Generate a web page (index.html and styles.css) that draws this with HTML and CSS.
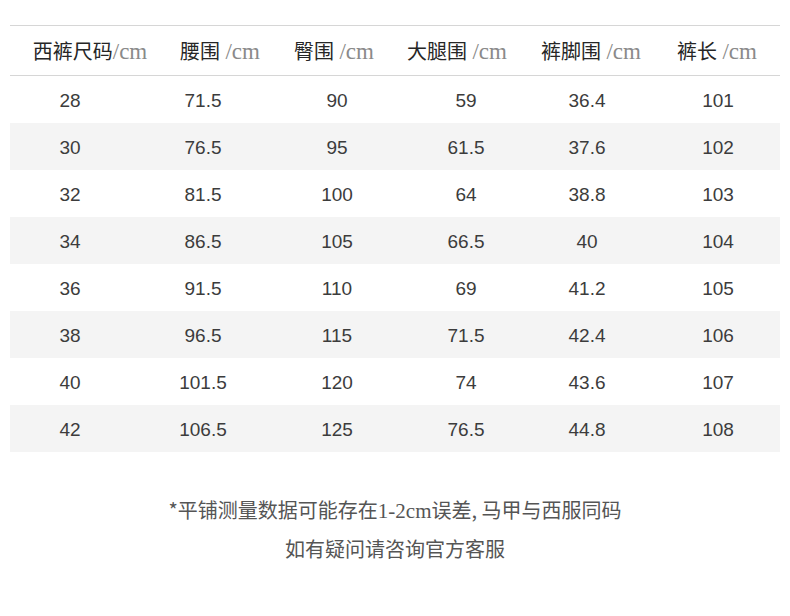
FILE: index.html
```html
<!DOCTYPE html>
<html lang="zh">
<head>
<meta charset="utf-8">
<link rel="stylesheet" href="styles.css">
</head>
<body>
<div class="page">
  <div class="table">
    <div class="row head">
      <div class="cell"><span class="zh">西裤尺码</span><span class="unit">/cm</span></div>
      <div class="cell"><span class="zh">腰围</span> <span class="unit">/cm</span></div>
      <div class="cell"><span class="zh">臀围</span> <span class="unit">/cm</span></div>
      <div class="cell"><span class="zh">大腿围</span> <span class="unit">/cm</span></div>
      <div class="cell"><span class="zh">裤脚围</span> <span class="unit">/cm</span></div>
      <div class="cell"><span class="zh">裤长</span> <span class="unit">/cm</span></div>
    </div>
    <div class="row"><div class="cell">28</div><div class="cell">71.5</div><div class="cell">90</div><div class="cell">59</div><div class="cell">36.4</div><div class="cell">101</div></div>
    <div class="row alt"><div class="cell">30</div><div class="cell">76.5</div><div class="cell">95</div><div class="cell">61.5</div><div class="cell">37.6</div><div class="cell">102</div></div>
    <div class="row"><div class="cell">32</div><div class="cell">81.5</div><div class="cell">100</div><div class="cell">64</div><div class="cell">38.8</div><div class="cell">103</div></div>
    <div class="row alt"><div class="cell">34</div><div class="cell">86.5</div><div class="cell">105</div><div class="cell">66.5</div><div class="cell">40</div><div class="cell">104</div></div>
    <div class="row"><div class="cell">36</div><div class="cell">91.5</div><div class="cell">110</div><div class="cell">69</div><div class="cell">41.2</div><div class="cell">105</div></div>
    <div class="row alt"><div class="cell">38</div><div class="cell">96.5</div><div class="cell">115</div><div class="cell">71.5</div><div class="cell">42.4</div><div class="cell">106</div></div>
    <div class="row"><div class="cell">40</div><div class="cell">101.5</div><div class="cell">120</div><div class="cell">74</div><div class="cell">43.6</div><div class="cell">107</div></div>
    <div class="row alt"><div class="cell">42</div><div class="cell">106.5</div><div class="cell">125</div><div class="cell">76.5</div><div class="cell">44.8</div><div class="cell">108</div></div>
  </div>
  <div class="note">
    <p class="line">*平铺测量数据可能存在<span class="serif">1-2cm</span>误差, 马甲与西服同码</p>
    <p class="line">如有疑问请咨询官方客服</p>
  </div>
</div>
</body>
</html>
```
FILE: styles.css
```css
html, body {
  margin: 0;
  padding: 0;
  background: #ffffff;
  overflow: hidden;
}
.page {
  width: 790px;
  height: 616px;
  padding: 25px 10px 0;
  box-sizing: border-box;
}
.table {
  width: 770px;
  display: flex;
  flex-direction: column;
  overflow: hidden;
}
.row {
  display: grid;
  grid-template-columns: 120px 146px 122px 136px 106px 140px;
  height: 47px;
  align-items: center;
  font-family: "Liberation Sans", "Noto Sans CJK SC", sans-serif;
  font-size: 19px;
  color: #3c3c3c;
}
.row .cell {
  padding-top: 3px;
}
.row .cell:last-child {
  padding-left: 16px;
}
.row.alt {
  background: #f4f4f4;
}
.row.head {
  grid-template-columns: 160px 100px 128px 118px 150px 102px;
  height: 49px;
  border-top: 1px solid #d6d6d6;
  border-bottom: 1px solid #d6d6d6;
  color: #222222;
}
.row.head .cell {
  padding-top: 0;
}
.row.head .cell:last-child {
  padding-left: 0;
}
.cell {
  text-align: center;
  white-space: nowrap;
}
.zh {
  font-family: "Noto Sans CJK SC", serif;
  font-size: 20px;
  color: #262626;
}
.unit {
  font-family: "Liberation Serif", serif;
  font-size: 23px;
  color: #8a8a8a;
}
.note {
  margin-top: 39px;
  text-align: center;
  font-family: "Noto Sans CJK SC", sans-serif;
  font-size: 20px;
  color: #555555;
}
.line {
  margin: 0;
  line-height: 38px;
}
.serif {
  font-family: "Liberation Serif", serif;
  font-size: 21px;
}
```
